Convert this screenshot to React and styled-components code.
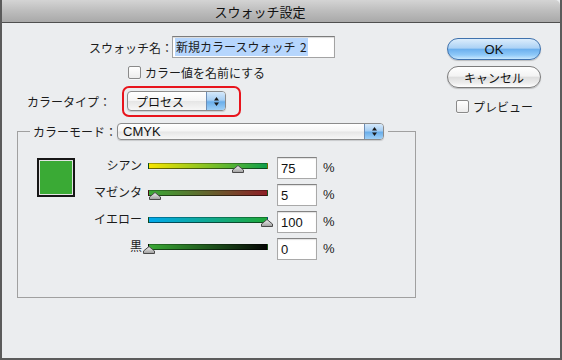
import React from 'react';
import styled, { createGlobalStyle } from 'styled-components';

const GlobalStyle = createGlobalStyle`
  html, body {
    margin: 0;
    padding: 0;
    background: #ebedef;
  }
  body {
    font-family: "Noto Sans CJK JP", "Liberation Sans", sans-serif;
    font-size: 12px;
    color: #1c1c1c;
  }
`;

// window frame
const Window = styled.div`
  width: 562px;
  height: 360px;
  box-sizing: border-box;
  display: flex;
  flex-direction: column;
  background: #ebedef;
  border: 2px solid #5b5b5b;
  border-top: none;
  overflow: hidden;
`;

const TitleBar = styled.div`
  height: 22px;
  flex: none;
  display: flex;
  align-items: center;
  justify-content: center;
  padding-right: 42px;
  background: linear-gradient(to bottom, #d4d4d4 0%, #bdbdbd 50%, #a9a9a9 100%);
  border-bottom: 1px solid #4f4f4f;
  border-top-right-radius: 5px;
  font-size: 13px;
  color: #111;
`;

const Body = styled.div`
  flex: 1;
  display: flex;
`;

const LeftColumn = styled.div`
  width: 430px;
  display: flex;
  flex-direction: column;
  padding-top: 13px;
`;

const RightColumn = styled.div`
  display: flex;
  flex-direction: column;
  gap: 6px;
  padding: 15px 0 0 15px;
`;

// form rows
const NameRow = styled.div`
  display: flex;
  align-items: center;
  padding-left: 87px;
`;

const FieldLabel = styled.span`
  box-sizing: border-box;
  width: ${p => p.$width}px;
  text-align: ${p => p.$align || 'left'};
  padding-right: ${p => p.$gap || 0}px;
  flex: none;
  white-space: nowrap;
`;

const TextInput = styled.div`
  width: 163px;
  height: 22px;
  box-sizing: border-box;
  display: flex;
  align-items: center;
  padding: 0 2px;
  background: #fff;
  border: 1px solid #a3a3a3;
  border-top-color: #7c7c7c;
  box-shadow: inset 0 1px 1px rgba(0, 0, 0, 0.15);
`;

const Selected = styled.span`
  background: #b6d6fd;
  padding: 1px 1px;
  line-height: 16px;
  word-spacing: 2px;
`;

const CheckRow = styled.label`
  display: flex;
  align-items: center;
  gap: 4px;
  margin-top: ${p => p.$top}px;
  padding-left: ${p => p.$left}px;
  height: 15px;
`;

const CheckBox = styled.span`
  width: 13px;
  height: 13px;
  box-sizing: border-box;
  border: 1px solid #8a8a8a;
  border-radius: 2px;
  background: linear-gradient(to bottom, #ffffff, #ececec);
  box-shadow: 0 1px 0 rgba(255, 255, 255, 0.6);
`;

const TypeRow = styled.div`
  display: flex;
  align-items: center;
  margin-top: 6px;
  padding-left: 25px;
`;

const Highlight = styled.div`
  border: 2px solid #e8141c;
  border-radius: 7px;
  padding: 3px 13px 4px 3px;
`;

// popup menus
const Popup = styled.div`
  width: ${p => p.$width}px;
  height: ${p => p.$height}px;
  box-sizing: border-box;
  display: flex;
  align-items: stretch;
  border: 1px solid #8b8b8b;
  border-radius: 4px;
  background: linear-gradient(to bottom, #ffffff 0%, #f5f5f5 48%, #e6e6e6 52%, #f7f7f7 100%);
  box-shadow: 0 1px 1px rgba(0, 0, 0, 0.15);
  overflow: hidden;
`;

const PopupText = styled.span`
  flex: 1;
  display: flex;
  align-items: center;
  padding-left: ${p => p.$pad}px;
  font-family: ${p => (p.$latin ? '"Liberation Sans", sans-serif' : 'inherit')};
  font-size: ${p => (p.$latin ? 13 : 12)}px;
  color: #111;
`;

const Stepper = styled.span`
  width: 18px;
  display: flex;
  align-items: center;
  justify-content: center;
  border-left: 1px solid #6d8db5;
  background: linear-gradient(to bottom, #d5e9fb 0%, #a6cef3 45%, #6aaeea 55%, #9fd0f7 100%);
`;

const StepArrows = () => (
  <svg width="7" height="11" viewBox="0 0 7 11">
    <path d="M3.5 1 L6 4.5 L1 4.5 Z" fill="#1a1a1a" />
    <path d="M3.5 10 L6 6.5 L1 6.5 Z" fill="#1a1a1a" />
  </svg>
);

// group box
const Group = styled.fieldset`
  margin: 6px 0 0 15px;
  padding: 0;
  width: 399px;
  box-sizing: border-box;
  border: 1px solid #a0a0a0;
  min-width: 0;
`;

const GroupLegend = styled.legend`
  margin-left: 12px;
  padding: 0 4px 0 3px;
  display: flex;
  align-items: center;
  height: 17px;
`;

const GroupContent = styled.div`
  display: flex;
  align-items: flex-start;
  padding: 17px 0 37px 19px;
`;

const Swatch = styled.div`
  width: 38px;
  height: 39px;
  box-sizing: border-box;
  margin: 1px 5px 0 0;
  border: 2px solid #161616;
  box-shadow: inset 0 0 0 1px #e4e4e4;
  background: #3aaa35;
`;

const SliderGrid = styled.div`
  display: grid;
  grid-template-columns: 62px 123px 40px auto;
  grid-auto-rows: 22px;
  row-gap: 5px;
  column-gap: 6px;
`;

const SliderLabel = styled.span`
  text-align: right;
  line-height: 16px;
  white-space: nowrap;
`;

const Track = styled.div`
  position: relative;
  margin: 6px 3px 0 0;
  height: 6px;
  box-sizing: border-box;
  border: 1px solid rgba(0, 0, 0, 0.55);
  border-top-color: rgba(0, 0, 0, 0.3);
  background: linear-gradient(to right, ${p => p.$from}, ${p => p.$to});
`;

const Thumb = styled.svg`
  position: absolute;
  top: 1px;
  width: 12px;
  height: 8px;
  transform: translateX(-50%);
  overflow: visible;
`;

const ValueBox = styled.div`
  height: 22px;
  box-sizing: border-box;
  display: flex;
  align-items: center;
  padding-left: 3px;
  background: #fff;
  border: 1px solid #a9a9a9;
  border-top-color: #838383;
  box-shadow: inset 0 1px 1px rgba(0, 0, 0, 0.12);
  font-family: "Liberation Sans", sans-serif;
  font-size: 13px;
  color: #111;
`;

const Percent = styled.span`
  font-family: "Liberation Sans", sans-serif;
  font-size: 13px;
  line-height: 21px;
`;

// buttons
const AquaButton = styled.div`
  width: 94px;
  height: 22px;
  box-sizing: border-box;
  display: flex;
  align-items: center;
  justify-content: center;
  border-radius: 11px;
  border: 1px solid ${p => (p.$primary ? '#3f72ad' : '#7c7c7c')};
  background: ${p =>
    p.$primary
      ? 'linear-gradient(to bottom, #dcedfc 0%, #acd2f5 45%, #6cb0ee 52%, #8fc9f8 80%, #c9e8fe 100%)'
      : 'linear-gradient(to bottom, #ffffff 0%, #f3f3f3 45%, #dedede 52%, #ededed 80%, #ffffff 100%)'};
  box-shadow: 0 1px 1px rgba(0, 0, 0, 0.2);
  font-family: ${p => (p.$primary ? '"Liberation Sans", sans-serif' : 'inherit')};
  font-size: ${p => (p.$primary ? 13 : 12)}px;
  color: #111;
`;

const sliders = [
  { label: 'シアン', value: 75, from: '#f7e500', to: '#0f9e4a' },
  { label: 'マゼンタ', value: 5, from: '#3aa835', to: '#8e1f26' },
  { label: 'イエロー', value: 100, from: '#00a9ec', to: '#1ea838' },
  { label: '黒', value: 0, from: '#39a935', to: '#050505' },
];

const App = () => {
  return (
    <>
      <GlobalStyle />
      <Window>
        <TitleBar>スウォッチ設定</TitleBar>
        <Body>
          <LeftColumn>
            <NameRow>
              <FieldLabel $width={83} $align="right" $gap={5}>スウォッチ名：</FieldLabel>
              <TextInput>
                <Selected>新規カラースウォッチ 2</Selected>
              </TextInput>
            </NameRow>

            <CheckRow $top={7} $left={126}>
              <CheckBox />
              カラー値を名前にする
            </CheckRow>

            <TypeRow>
              <FieldLabel $width={95}>カラータイプ：</FieldLabel>
              <Highlight>
                <Popup $width={99} $height={20}>
                  <PopupText $pad={8}>プロセス</PopupText>
                  <Stepper><StepArrows /></Stepper>
                </Popup>
              </Highlight>
            </TypeRow>

            <Group>
              <GroupLegend>
                <FieldLabel $width={84}>カラーモード：</FieldLabel>
                <Popup $width={267} $height={17}>
                  <PopupText $pad={5} $latin>CMYK</PopupText>
                  <Stepper><StepArrows /></Stepper>
                </Popup>
              </GroupLegend>
              <GroupContent>
                <Swatch />
                <SliderGrid>
                  {sliders.map(s => (
                    <React.Fragment key={s.label}>
                      <SliderLabel>{s.label}</SliderLabel>
                      <Track $from={s.from} $to={s.to}>
                        <Thumb viewBox="0 0 12 8" style={{ left: `${s.value}%` }}>
                          <defs>
                            <linearGradient id={`t${s.value}`} x1="0" y1="0" x2="0" y2="1">
                              <stop offset="0" stopColor="#f2f2f2" />
                              <stop offset="1" stopColor="#9d9d9d" />
                            </linearGradient>
                          </defs>
                          <path d="M6 0.5 L11.5 5 L11.5 7.5 L0.5 7.5 L0.5 5 Z" fill={`url(#t${s.value})`} stroke="#4a4a4a" strokeWidth="1" />
                        </Thumb>
                      </Track>
                      <ValueBox>{s.value}</ValueBox>
                      <Percent>%</Percent>
                    </React.Fragment>
                  ))}
                </SliderGrid>
              </GroupContent>
            </Group>
          </LeftColumn>

          <RightColumn>
            <AquaButton $primary>OK</AquaButton>
            <AquaButton>キャンセル</AquaButton>
            <CheckRow $top={5} $left={9}>
              <CheckBox />
              プレビュー
            </CheckRow>
          </RightColumn>
        </Body>
      </Window>
    </>
  );
};

export default App;
